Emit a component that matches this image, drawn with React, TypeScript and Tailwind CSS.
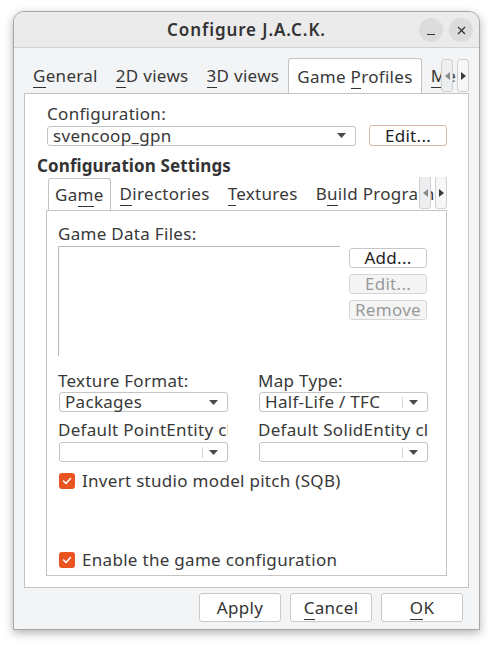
import React from 'react'

function Arrow() {
  return (
    <svg width="9" height="5" viewBox="0 0 9 5">
      <polygon points="0,0 9,0 4.5,5" fill="#4a4a4a" />
    </svg>
  )
}

function Combo({ value, width, sep }: { value: string; width: string; sep?: boolean }) {
  return (
    <div className={`${width} h-[20px] flex items-center border border-[#c4c4c4] rounded-[3px] bg-white`}>
      <span className="flex-1 pl-[5px] leading-[18px] whitespace-nowrap">{value}</span>
      {sep && <div className="w-px h-[11px] bg-[#d8d8d8] mr-[6px]" />}
      <div className="pr-[9px] flex items-center">
        <Arrow />
      </div>
    </div>
  )
}

function Btn({ children, disabled, cls }: { children: React.ReactNode; disabled?: boolean; cls: string }) {
  return (
    <div
      className={`${cls} shrink-0 flex items-center justify-center border rounded-[3px] ${
        disabled ? 'border-[#d6d6d6] bg-[#f4f4f4] text-[#9a9a9a]' : 'border-[#c8c8c8] bg-white text-[#222]'
      }`}
    >
      {children}
    </div>
  )
}

function Check({ label }: { label: string }) {
  return (
    <div className="flex items-center gap-[7px]">
      <div className="w-[16px] h-[16px] rounded-[3px] bg-[#e95420] flex items-center justify-center">
        <svg width="10" height="8" viewBox="0 0 10 8" fill="none" stroke="#fff" strokeWidth="1.6" strokeLinecap="round" strokeLinejoin="round">
          <polyline points="1.5,4 4,6.5 8.5,1.5" />
        </svg>
      </div>
      <span className="leading-[20px] whitespace-nowrap">{label}</span>
    </div>
  )
}

function ScrollBtns({ cls }: { cls: string }) {
  return (
    <div className={`absolute ${cls} flex gap-[4px]`}>
      <div className="w-[12px] h-[33px] rounded-[3px] border border-[#d0d0d0] bg-[#eceef0] flex items-center justify-center">
        <svg width="5" height="8" viewBox="0 0 5 8">
          <polygon points="5,0 5,8 0,4" fill="#8a8a8a" />
        </svg>
      </div>
      <div className="w-[12px] h-[33px] rounded-[3px] border border-[#d0d0d0] bg-[#f6f7f8] flex items-center justify-center">
        <svg width="5" height="8" viewBox="0 0 5 8">
          <polygon points="0,0 0,8 5,4" fill="#3a3a3a" />
        </svg>
      </div>
    </div>
  )
}

export default function App() {
  return (
    <div className="w-[493px] h-[646px] bg-white pt-[11px] pl-[13px] font-['Noto_Sans',sans-serif] text-[17px] tracking-[0.3px] text-[#383838]">
      <div className="w-[467px] h-[619px] flex flex-col rounded-t-[11px] border border-[#a6a6a6] bg-[#f3f4f6] shadow-[0_3px_10px_rgba(0,0,0,0.3)] overflow-hidden">
        {/* title bar */}
        <div className="relative h-[36px] shrink-0 bg-[#ebebeb] border-b border-[#d2d2d2] flex items-center justify-center">
          <span className="font-semibold text-[17px] tracking-[0.9px] text-[#333]">Configure J.A.C.K.</span>
          <div className="absolute right-[6px] top-[6px] flex gap-[6px]">
            <div className="w-[24px] h-[24px] rounded-full bg-[#dcdcdc] flex items-end justify-center pb-[7px]">
              <div className="w-[8px] h-[1.5px] bg-[#333]" />
            </div>
            <div className="w-[24px] h-[24px] rounded-full bg-[#dcdcdc] flex items-center justify-center">
              <svg width="9" height="9" viewBox="0 0 9 9" stroke="#333" strokeWidth="1.3">
                <line x1="1" y1="1" x2="8" y2="8" />
                <line x1="8" y1="1" x2="1" y2="8" />
              </svg>
            </div>
          </div>
        </div>

        <div className="flex-1 flex flex-col pl-[10px] pt-[10px]">
          {/* outer tabs */}
          <div className="relative w-[445px] h-[35px] flex items-end overflow-hidden whitespace-nowrap">
            <div className="shrink-0 px-[9px] h-[34px] flex items-center"><span><u className="no-underline border-b border-[#333] leading-[15px]">G</u>eneral</span></div>
            <div className="shrink-0 px-[9px] h-[34px] flex items-center"><span><u className="no-underline border-b border-[#333] leading-[15px]">2</u>D views</span></div>
            <div className="shrink-0 px-[9px] h-[34px] flex items-center"><span><u className="no-underline border-b border-[#333] leading-[15px]">3</u>D views</span></div>
            <div className="shrink-0 relative z-10 -mb-px px-[8px] h-[36px] flex items-center border border-b-0 border-[#c4c4c4] rounded-t-[3px] bg-white">
              <span>Game <u className="no-underline border-b border-[#333] leading-[15px]">P</u>rofiles</span>
            </div>
            <div className="shrink-0 px-[9px] h-[34px] flex items-center"><span><u className="no-underline border-b border-[#333] leading-[15px]">M</u>essages</span></div>
            <ScrollBtns cls="right-0 top-px" />
          </div>

          {/* outer pane */}
          <div className="w-[445px] h-[495px] border border-[#c4c4c4] bg-white flex flex-col">
            <div className="pl-[22px] pt-[10px] leading-[20px]">Configuration:</div>
            <div className="pl-[22px] mt-[1px] flex items-center">
              <Combo value="svencoop_gpn" width="w-[309px]" />
              <div className="ml-[13px] w-[78px] h-[21px] border border-[#d9b7ad] rounded-[3px] bg-white flex items-center justify-center text-[#222]">Edit...</div>
            </div>

            <div className="pl-[12px] mt-[9px] font-bold text-[17px] tracking-[0.1px] leading-[22px] text-[#333]">Configuration Settings</div>

            {/* inner tabs */}
            <div className="ml-[21px] w-[401px]">
              <div className="relative h-[33px] flex items-end overflow-hidden whitespace-nowrap">
                <div className="shrink-0 relative z-10 -mb-px px-[6px] ml-[2px] h-[33px] flex items-center border border-b-0 border-[#c4c4c4] rounded-t-[3px] bg-white">
                  <span>Ga<u className="no-underline border-b border-[#333] leading-[15px]">m</u>e</span>
                </div>
                <div className="shrink-0 px-[9px] h-[32px] flex items-center"><span><u className="no-underline border-b border-[#333] leading-[15px]">D</u>irectories</span></div>
                <div className="shrink-0 px-[9px] h-[32px] flex items-center"><span><u className="no-underline border-b border-[#333] leading-[15px]">T</u>extures</span></div>
                <div className="shrink-0 px-[9px] h-[32px] flex items-center"><span>B<u className="no-underline border-b border-[#333] leading-[15px]">u</u>ild Programs</span></div>
                <ScrollBtns cls="right-0 -top-[1px]" />
              </div>

              <div className="h-[366px] border border-[#c4c4c4] bg-white pl-[11px] pt-[13px] flex flex-col">
                <div className="leading-[20px]">Game Data Files:</div>
                <div className="flex mt-[2px]">
                  <div className="w-[282px] h-[110px] border-t border-l border-[#b8b8b8]" />
                  <div className="ml-[9px] mt-[2px] flex flex-col gap-[6px]">
                    <Btn cls="w-[78px] h-[20px]">Add...</Btn>
                    <Btn cls="w-[78px] h-[20px]" disabled>Edit...</Btn>
                    <Btn cls="w-[78px] h-[20px]" disabled>Remove</Btn>
                  </div>
                </div>

                <div className="flex mt-[14px] gap-[30px]">
                  <div className="w-[170px]">
                    <div className="leading-[21px] whitespace-nowrap">Texture Format:</div>
                    <div className="mt-[1px] pl-px"><Combo value="Packages" width="w-[169px]" /></div>
                    <div className="mt-[7px] leading-[21px] whitespace-nowrap overflow-hidden">Default PointEntity class:</div>
                    <div className="mt-[2px] pl-px"><Combo value="" width="w-[169px]" sep /></div>
                  </div>
                  <div className="w-[170px]">
                    <div className="leading-[21px] whitespace-nowrap">Map Type:</div>
                    <div className="mt-[1px] pl-px"><Combo value="Half-Life / TFC" width="w-[169px]" sep /></div>
                    <div className="mt-[7px] leading-[21px] whitespace-nowrap overflow-hidden">Default SolidEntity class:</div>
                    <div className="mt-[2px] pl-px"><Combo value="" width="w-[169px]" sep /></div>
                  </div>
                </div>

                <div className="mt-[9px] pl-px">
                  <Check label="Invert studio model pitch (SQB)" />
                </div>
                <div className="mt-[59px] pl-px">
                  <Check label="Enable the game configuration" />
                </div>
              </div>
            </div>
          </div>

          {/* dialog buttons */}
          <div className="w-[439px] flex justify-end gap-[9px] mt-[5px]">
            <Btn cls="w-[82px] h-[29px] text-[#333]">Apply</Btn>
            <Btn cls="w-[82px] h-[29px] text-[#333]"><span><u className="no-underline border-b border-[#333] leading-[15px]">C</u>ancel</span></Btn>
            <Btn cls="w-[82px] h-[29px] text-[#333]"><span><u className="no-underline border-b border-[#333] leading-[15px]">O</u>K</span></Btn>
          </div>
        </div>
      </div>
    </div>
  )
}
